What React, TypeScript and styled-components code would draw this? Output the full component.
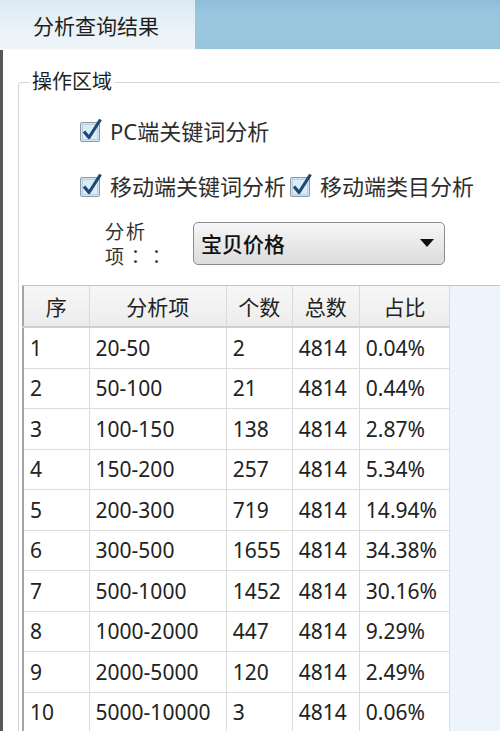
import React from 'react';
import styled, { createGlobalStyle } from 'styled-components';

const GlobalStyle = createGlobalStyle`
  html, body {
    margin: 0;
    padding: 0;
    background: #ffffff;
  }
  body {
    font-family: "Noto Sans", "Noto Sans CJK SC", sans-serif;
    color: #222;
  }
`;

const Window = styled.div`
  width: 500px;
  height: 731px;
  overflow: hidden;
  display: flex;
  flex-direction: column;
  background: #fff;
`;

const TabBar = styled.div`
  display: flex;
  height: 50px;
  flex-shrink: 0;
  background: linear-gradient(#8fbcd9, #9ac7e0 30%, #99c6df);
  border-bottom: 1px solid #f4fafd;
  box-sizing: border-box;
`;

const Tab = styled.div`
  width: 195px;
  display: flex;
  align-items: center;
  padding-left: 33px;
  box-sizing: border-box;
  font-size: 21px;
  color: #1e1e1e;
  background: linear-gradient(#dce9f2, #eaf2f8 60%, #eef5fa);
`;

const Body = styled.div`
  flex: 1;
  border-left: 3px solid #575757;
  padding: 20px 0 0 15px;
  min-height: 0;
`;

const GroupBox = styled.fieldset`
  margin: 0;
  padding: 0 0 0 3px;
  border: 1px solid #d6d6d6;
  border-right: none;
  border-bottom: none;
  border-top-left-radius: 4px;
  min-width: 0;
`;

const Legend = styled.legend`
  margin-left: 7px;
  padding: 0 3px;
  font-size: 20px;
  line-height: 24px;
  color: #1e1e1e;
`;

const Options = styled.div`
  display: flex;
  flex-direction: column;
  padding-left: 58px;
  padding-top: 21px;
  gap: 25px;
`;

const CheckRow = styled.div`
  display: flex;
  align-items: center;
  height: 30px;
  gap: 4px;
`;

const CheckItem = styled.label`
  display: flex;
  align-items: center;
  gap: 8px;
  font-size: 22px;
  color: #2e2e2e;
  white-space: nowrap;
`;

const SelectRow = styled.div`
  display: flex;
  align-items: center;
  margin-top: 18px;
  padding-left: 83px;
`;

const FieldLabel = styled.div`
  width: 88px;
  font-family: "Noto Sans CJK JP", "Noto Sans CJK SC", sans-serif;
  font-size: 19px;
  line-height: 25px;
  color: #333;
  letter-spacing: 2px;
`;

const Select = styled.div`
  width: 252px;
  height: 43px;
  box-sizing: border-box;
  border: 1px solid #8c8c8c;
  border-radius: 5px;
  background: linear-gradient(#f6f6f6, #e9e9e9 50%, #dcdcdc);
  display: flex;
  align-items: center;
  justify-content: space-between;
  padding: 0 10px 0 7px;
  font-size: 21px;
  color: #111;
  font-weight: 500;
`;

const GridArea = styled.div`
  margin-top: 17px;
  background: #edf4fb;
  border-top: 1px solid #c4c4c4;
  height: 460px;
`;

const Table = styled.table`
  width: 428px;
  border-collapse: collapse;
  table-layout: fixed;
  background: #fff;
  border-left: 2px solid #a6a6a6;
  font-size: 21px;
  color: #222;
`;

const HeadCell = styled.th`
  height: 40px;
  font-weight: normal;
  text-align: center;
  background: linear-gradient(#f7f7f7, #ececec);
  border-right: 1px solid #dadada;
  border-bottom: 2px solid #cfcfcf;
  padding: 0;
`;

const Cell = styled.td`
  height: 39.5px;
  padding: 0 0 0 6px;
  border-right: 1px solid #dcdcdc;
  border-bottom: 1px solid #dcdcdc;
  white-space: nowrap;
  overflow: hidden;
`;

const CheckBox = () => (
  <svg width="22" height="24" viewBox="0 0 22 24">
    <rect x="0.5" y="4.5" width="19" height="19" rx="1.5" fill="#cfe5f4" stroke="#8d9aa6" />
    <rect x="2.5" y="6.5" width="15" height="15" fill="#d9ecf8" stroke="#b8d1e3" />
    <path d="M4 13.5 L9 19.5 L20.5 1.5" fill="none" stroke="#1d4a72" strokeWidth="3.2" strokeLinejoin="round" />
  </svg>
);

const columns = [
  { title: '序', w: 66 },
  { title: '分析项', w: 137 },
  { title: '个数', w: 66 },
  { title: '总数', w: 67 },
  { title: '占比', w: 90 },
];

const rows = [
  ['1', '20-50', '2', '4814', '0.04%'],
  ['2', '50-100', '21', '4814', '0.44%'],
  ['3', '100-150', '138', '4814', '2.87%'],
  ['4', '150-200', '257', '4814', '5.34%'],
  ['5', '200-300', '719', '4814', '14.94%'],
  ['6', '300-500', '1655', '4814', '34.38%'],
  ['7', '500-1000', '1452', '4814', '30.16%'],
  ['8', '1000-2000', '447', '4814', '9.29%'],
  ['9', '2000-5000', '120', '4814', '2.49%'],
  ['10', '5000-10000', '3', '4814', '0.06%'],
];

export default function App() {
  return (
    <Window>
      <GlobalStyle />
      <TabBar>
        <Tab>分析查询结果</Tab>
      </TabBar>
      <Body>
        <GroupBox>
          <Legend>操作区域</Legend>
          <Options>
            <CheckRow>
              <CheckItem>
                <CheckBox />
                PC端关键词分析
              </CheckItem>
            </CheckRow>
            <CheckRow>
              <CheckItem>
                <CheckBox />
                移动端关键词分析
              </CheckItem>
              <CheckItem>
                <CheckBox />
                移动端类目分析
              </CheckItem>
            </CheckRow>
          </Options>
          <SelectRow>
            <FieldLabel>
              分析
              <br />
              项：：
            </FieldLabel>
            <Select>
              <span>宝贝价格</span>
              <svg width="14" height="8" viewBox="0 0 14 8">
                <path d="M0 0 H14 L7 8 Z" fill="#111" />
              </svg>
            </Select>
          </SelectRow>
          <GridArea>
            <Table>
              <colgroup>
                {columns.map(c => (
                  <col key={c.title} style={{ width: c.w }} />
                ))}
              </colgroup>
              <thead>
                <tr>
                  {columns.map(c => (
                    <HeadCell key={c.title}>{c.title}</HeadCell>
                  ))}
                </tr>
              </thead>
              <tbody>
                {rows.map(r => (
                  <tr key={r[0]}>
                    {r.map((v, i) => (
                      <Cell key={i}>{v}</Cell>
                    ))}
                  </tr>
                ))}
              </tbody>
            </Table>
          </GridArea>
        </GroupBox>
      </Body>
    </Window>
  );
}
